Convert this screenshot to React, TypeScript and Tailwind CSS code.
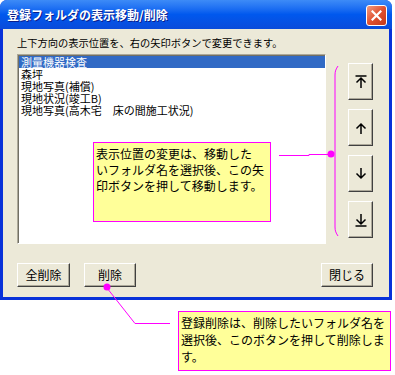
import * as React from 'react';

const font = { fontFamily: '"MS UI Gothic", "Noto Sans CJK JP", sans-serif' };

const items = [
  '測量機器検査',
  '森坪',
  '現地写真(補償)',
  '現地状況(竣工B)',
  '現地写真(高木宅　床の間施工状況)',
];

function ArrowIcon({ kind }: { kind: 'top' | 'up' | 'down' | 'bottom' }) {
  const up = kind === 'top' || kind === 'up';
  return (
    <svg width="14" height="16" viewBox="0 0 14 16" fill="none" stroke="#000" strokeWidth="1.5">
      {kind === 'top' && <path d="M1.5 2h11" />}
      {kind === 'bottom' && <path d="M1.5 14h11" />}
      {up ? (
        <path d="M7 14V4M2.5 8.5L7 4l4.5 4.5" />
      ) : (
        <path d="M7 2v10M2.5 7.5L7 12l4.5-4.5" />
      )}
    </svg>
  );
}

function XpButton({ children, className = '' }: { children: React.ReactNode; className?: string }) {
  return (
    <button
      className={`flex items-center justify-center bg-[#ECE9D8] border border-t-white border-l-white border-r-[#404040] border-b-[#404040] shadow-[inset_-1px_-1px_#ACA899] text-[12px] text-black ${className}`}
    >
      {children}
    </button>
  );
}

export default function App() {
  return (
    <div className="relative w-[395px] h-[375px] bg-white overflow-hidden" style={font}>
      {/* Dialog window */}
      <div className="w-[392px] rounded-t-[7px] bg-[#0831D9] flex flex-col">
        <div className="h-[29px] rounded-t-[7px] bg-gradient-to-b from-[#3D8BF7] via-[#0058EE] to-[#0A4BDA] flex items-center justify-between pl-[7px] pr-[5px]">
          <span className="text-white font-bold text-[12px] [text-shadow:1px_1px_#0A1E8C]">
            登録フォルダの表示移動/削除
          </span>
          <div className="w-[21px] h-[21px] rounded-[3px] border border-white bg-gradient-to-br from-[#F09A7E] via-[#E0502F] to-[#C5381A] flex items-center justify-center mt-[1px]">
            <svg width="11" height="11" viewBox="0 0 11 11" stroke="#fff" strokeWidth="2.2" strokeLinecap="square">
              <path d="M1.5 1.5l8 8M9.5 1.5l-8 8" />
            </svg>
          </div>
        </div>

        <div className="mx-[3px] mb-[3px] bg-[#ECE9D8] h-[268px] flex flex-col pl-[14px] pr-[16px]">
          <p className="text-[10.25px] leading-[13px] mt-[7px] text-black">
            上下方向の表示位置を、右の矢印ボタンで変更できます。
          </p>

          <div className="flex mt-[5px]">
            <div className="w-[311px] h-[190px] bg-white border border-t-[#ACA899] border-l-[#ACA899] border-r-white border-b-white shadow-[inset_1px_1px_#716F64] pt-[1px] pl-[1px]">
              {items.map((it, i) => (
                <div
                  key={it}
                  className={`h-[12px] leading-[12px] text-[11px] pl-[2px] whitespace-nowrap ${
                    i === 0 ? 'bg-[#316AC5] text-white' : 'text-black'
                  }`}
                >
                  {it}
                </div>
              ))}
            </div>

            <div className="flex flex-col gap-[9px] ml-[22px] mt-[9px]">
              {(['top', 'up', 'down', 'bottom'] as const).map((k) => (
                <XpButton key={k} className="w-[25px] h-[37px]">
                  <ArrowIcon kind={k} />
                </XpButton>
              ))}
            </div>
          </div>

          <div className="flex mt-[19px]">
            <XpButton className="w-[53px] h-[24px]">全削除</XpButton>
            <XpButton className="w-[52px] h-[24px] ml-[14px]">削除</XpButton>
            <XpButton className="w-[52px] h-[24px] ml-auto">閉じる</XpButton>
          </div>
        </div>
      </div>

      {/* Annotation lines */}
      <svg className="absolute left-0 top-0" width="395" height="375" fill="none">
        <path d="M279 155.5h30v-1h21" stroke="#FF00FF" />
        <path d="M338 66c-2 3-3 5-3 9v152c0 4 1 6 3 9" stroke="#FF00FF" />
        <circle cx="331" cy="154" r="3.5" fill="#FF00FF" />
        <path d="M107 288L135 323.5H170" stroke="#FF00FF" />
        <circle cx="107" cy="287" r="3.5" fill="#FF00FF" />
      </svg>

      {/* Callout boxes */}
      <div className="absolute left-[93px] top-[142px] w-[178px] h-[80px] bg-[#FFFF99] border border-[#FF00FF] px-[2px] pt-[3px] text-[12px] leading-[16px] text-black whitespace-nowrap">
        表示位置の変更は、移動した
        <br />
        いフォルダ名を選択後、この矢
        <br />
        印ボタンを押して移動します。
      </div>
      <div className="absolute left-[178px] top-[311px] w-[213px] h-[60px] bg-[#FFFF99] border border-[#FF00FF] px-[2px] pt-[2px] text-[12px] leading-[17px] text-black whitespace-nowrap">
        登録削除は、削除したいフォルダ名を
        <br />
        選択後、このボタンを押して削除しま
        <br />
        す。
      </div>
    </div>
  );
}
